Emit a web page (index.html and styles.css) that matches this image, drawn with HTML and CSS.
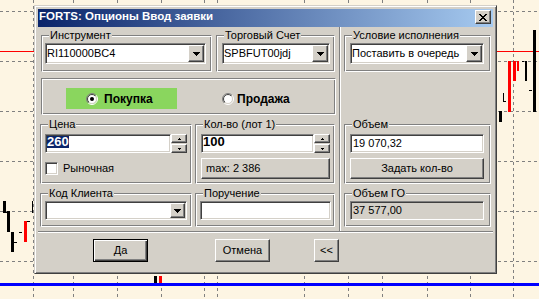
FILE: index.html
```html
<!DOCTYPE html>
<html lang="ru">
<head>
<meta charset="utf-8">
<title>FORTS: Опционы Ввод заявки</title>
<link rel="stylesheet" href="styles.css">
</head>
<body>
<div class="desktop">
  <svg class="chart" width="539" height="299" viewBox="0 0 539 299">
    <g stroke="#808080" stroke-width="1" stroke-dasharray="3 3" fill="none">
      <line x1="0" y1="11.5" x2="539" y2="11.5"/>
      <line x1="0" y1="61.5" x2="539" y2="61.5"/>
      <line x1="0" y1="111.5" x2="539" y2="111.5"/>
      <line x1="0" y1="161.5" x2="539" y2="161.5"/>
      <line x1="0" y1="211.5" x2="539" y2="211.5"/>
      <line x1="0" y1="261.5" x2="539" y2="261.5"/>
      <line x1="33.5" y1="0" x2="33.5" y2="299"/>
      <line x1="73.5" y1="0" x2="73.5" y2="299"/>
      <line x1="117.5" y1="0" x2="117.5" y2="299"/>
      <line x1="161.5" y1="0" x2="161.5" y2="299"/>
      <line x1="204.5" y1="0" x2="204.5" y2="299"/>
      <line x1="217.5" y1="0" x2="217.5" y2="299"/>
      <line x1="304.5" y1="0" x2="304.5" y2="299"/>
      <line x1="348.5" y1="0" x2="348.5" y2="299"/>
      <line x1="382.5" y1="0" x2="382.5" y2="299"/>
      <line x1="427.5" y1="0" x2="427.5" y2="299"/>
      <line x1="470.5" y1="0" x2="470.5" y2="299"/>
      <line x1="513.5" y1="0" x2="513.5" y2="299"/>
    </g>
    <line x1="0" y1="51.5" x2="539" y2="51.5" stroke="#ff0000" stroke-width="1"/>
    <rect x="0" y="283" width="539" height="3" fill="#0000ff"/>
    <g fill="#000">
      <rect x="3" y="201" width="3" height="12"/>
      <rect x="6" y="212" width="2" height="1"/>
      <rect x="7" y="211" width="3" height="21"/>
      <rect x="11" y="232" width="3" height="20"/>
      <rect x="14" y="242" width="3" height="1"/>
      <rect x="19" y="232" width="3" height="1"/>
      <rect x="32" y="201" width="1" height="12"/>
      <rect x="154" y="276" width="3" height="7"/>
      <rect x="533" y="30" width="3" height="82"/>
      <rect x="525" y="61" width="2" height="20"/>
      <rect x="522" y="61" width="2" height="1"/>
      <rect x="503" y="93" width="1" height="9"/>
      <rect x="504" y="101" width="2" height="1"/>
      <rect x="529" y="90" width="3" height="1"/>
      <rect x="499" y="111" width="3" height="11"/>
    </g>
    <g fill="#ff0000">
      <rect x="24" y="221" width="3" height="21"/>
      <rect x="159" y="276" width="3" height="7"/>
      <rect x="508" y="61" width="3" height="51"/>
      <rect x="513" y="61" width="3" height="20"/>
      <rect x="517" y="61" width="2" height="10"/>
    </g>
    <g fill="#000">
      <rect x="27" y="221" width="3" height="1"/>
    </g>
  </svg>

  <div class="dialog">
    <div class="caption">
      <span class="caption-title">FORTS: Опционы Ввод заявки</span>
      <span class="close-btn">
        <svg width="8" height="7" viewBox="0 0 8 7"><path fill="#000" d="M0 0h2v1H0z M6 0h2v1H6z M1 1h2v1H1z M5 1h2v1H5z M2 2h4v1H2z M3 3h2v1H3z M2 4h4v1H2z M1 5h2v1H1z M5 5h2v1H5z M0 6h2v1H0z M6 6h2v1H6z"/></svg>
      </span>
    </div>
    <div class="client">
      <div class="main">
        <div class="col-left">
          <div class="row1">
            <div class="group g-instr">
              <div class="legend">Инструмент</div>
              <div class="combo combo-instr"><span class="combo-text">RI110000BC4</span><span class="combo-btn"><svg width="7" height="4" viewBox="0 0 7 4"><path fill="#000" d="M0 0h7v1H0z M1 1h5v1H1z M2 2h3v1H2z M3 3h1v1H3z"/></svg></span></div>
            </div>
            <div class="group g-acct">
              <div class="legend">Торговый Счет</div>
              <div class="combo combo-acct"><span class="combo-text">SPBFUT00jdj</span><span class="combo-btn"><svg width="7" height="4" viewBox="0 0 7 4"><path fill="#000" d="M0 0h7v1H0z M1 1h5v1H1z M2 2h3v1H2z M3 3h1v1H3z"/></svg></span></div>
            </div>
          </div>

          <div class="side">
            <div class="side-buy">
              <span class="radio">
                <svg width="12" height="12" viewBox="0 0 12 12">
                  <defs>
                    <linearGradient id="ro" x1="0" y1="0" x2="1" y2="1"><stop offset="0.5" stop-color="#808080"/><stop offset="0.5" stop-color="#ffffff"/></linearGradient>
                    <linearGradient id="ri" x1="0" y1="0" x2="1" y2="1"><stop offset="0.5" stop-color="#404040"/><stop offset="0.5" stop-color="#d4d0c8"/></linearGradient>
                  </defs>
                  <circle cx="6" cy="6" r="5.5" fill="none" stroke="url(#ro)"/>
                  <circle cx="6" cy="6" r="4.5" fill="#fff" stroke="url(#ri)"/>
                  <circle cx="6" cy="6" r="2" fill="#000"/>
                </svg>
              </span>
              <span class="radio-label label-buy">Покупка</span>
            </div>
            <div class="side-sell">
              <span class="radio">
                <svg width="12" height="12" viewBox="0 0 12 12">
                  <circle cx="6" cy="6" r="5.5" fill="none" stroke="url(#ro)"/>
                  <circle cx="6" cy="6" r="4.5" fill="#fff" stroke="url(#ri)"/>
                </svg>
              </span>
              <span class="radio-label label-sell">Продажа</span>
            </div>
          </div>

          <div class="row3">
            <div class="group g-price">
              <div class="legend">Цена</div>
              <div class="spinedit spin-price">
                <div class="edit edit-price"><span class="edit-bold selected">260</span></div>
                <div class="spin">
                  <span class="spin-btn"><svg width="3" height="2" viewBox="0 0 3 2"><path fill="#000" d="M1 0h1v1H1z M0 1h3v1H0z"/></svg></span>
                  <span class="spin-btn"><svg width="3" height="2" viewBox="0 0 3 2"><path fill="#000" d="M0 0h3v1H0z M1 1h1v1H1z"/></svg></span>
                </div>
              </div>
              <div class="check-row">
                <span class="checkbox"></span>
                <span class="check-label">Рыночная</span>
              </div>
            </div>
            <div class="group g-qty">
              <div class="legend">Кол-во (лот 1)</div>
              <div class="spinedit spin-qty">
                <div class="edit edit-qty"><span class="edit-bold">100</span></div>
                <div class="spin">
                  <span class="spin-btn"><svg width="3" height="2" viewBox="0 0 3 2"><path fill="#000" d="M1 0h1v1H1z M0 1h3v1H0z"/></svg></span>
                  <span class="spin-btn"><svg width="3" height="2" viewBox="0 0 3 2"><path fill="#000" d="M0 0h3v1H0z M1 1h1v1H1z"/></svg></span>
                </div>
              </div>
              <div class="btn btn-max">max: 2 386</div>
            </div>
          </div>

          <div class="row4">
            <div class="group g-client">
              <div class="legend">Код Клиента</div>
              <div class="combo combo-small combo-client"><span class="combo-text"></span><span class="combo-btn"><svg width="7" height="4" viewBox="0 0 7 4"><path fill="#000" d="M0 0h7v1H0z M1 1h5v1H1z M2 2h3v1H2z M3 3h1v1H3z"/></svg></span></div>
            </div>
            <div class="group g-order">
              <div class="legend">Поручение</div>
              <div class="edit edit-order"></div>
            </div>
          </div>
        </div>

        <div class="vsep"></div>

        <div class="col-right">
          <div class="group g-cond">
            <div class="legend">Условие исполнения</div>
            <div class="combo combo-cond"><span class="combo-text">Поставить в очередь</span><span class="combo-btn"><svg width="7" height="4" viewBox="0 0 7 4"><path fill="#000" d="M0 0h7v1H0z M1 1h5v1H1z M2 2h3v1H2z M3 3h1v1H3z"/></svg></span></div>
          </div>
          <div class="group g-vol">
            <div class="legend">Объем</div>
            <div class="edit edit-vol">19 070,32</div>
            <div class="btn btn-setqty">Задать кол-во</div>
          </div>
          <div class="group g-margin">
            <div class="legend">Объем ГО</div>
            <div class="edit edit-margin">37 577,00</div>
          </div>
        </div>
      </div>
      <div class="hsep"></div>
      <div class="buttons">
        <div class="btn btn-default btn-ok">Да</div>
        <div class="btn btn-cancel">Отмена</div>
        <div class="btn btn-more">&lt;&lt;</div>
      </div>
    </div>
  </div>
</div>
</body>
</html>
```

FILE: styles.css
```css
html, body {
  margin: 0;
  padding: 0;
}
body {
  width: 539px;
  height: 299px;
  overflow: hidden;
  font-family: "Liberation Sans", Arial, sans-serif;
  font-size: 11px;
  color: #000;
}
.desktop {
  position: relative;
  width: 539px;
  height: 299px;
  background: #fdf5e3;
  overflow: hidden;
}
.chart {
  position: absolute;
  left: 0;
  top: 0;
  display: block;
}
.dialog {
  position: absolute;
  left: 34px;
  top: 5px;
  width: 463px;
  height: 269px;
  box-sizing: border-box;
  background: #d4d0c8;
  border: 1px solid;
  border-color: #d4d0c8 #404040 #404040 #d4d0c8;
  box-shadow: inset 1px 1px #fff, inset -1px -1px #808080;
  padding: 3px;
  display: flex;
  flex-direction: column;
}
.caption {
  height: 18px;
  flex: none;
  display: flex;
  align-items: flex-start;
  justify-content: space-between;
  background: linear-gradient(to right, #0a246a, #a6caf0);
  color: #fff;
  padding: 0 2px 0 1px;
}
.caption-title {
  font-weight: bold;
  font-size: 11.5px;
  line-height: 15px;
  white-space: nowrap;
}
.close-btn {
  margin-top: 1px;
  width: 16px;
  height: 14px;
  box-sizing: border-box;
  background: #d4d0c8;
  border: 1px solid;
  border-color: #fff #404040 #404040 #fff;
  box-shadow: inset -1px -1px #808080;
  display: flex;
  align-items: center;
  justify-content: center;
  padding-right: 1px;
}
.close-btn svg { display: block; }
.client {
  flex: 1;
  display: flex;
  flex-direction: column;
}
.main {
  height: 204px;
  display: flex;
}
.col-left {
  width: 301px;
  display: flex;
  flex-direction: column;
}
.col-right {
  padding-left: 3px;
  display: flex;
  flex-direction: column;
}
.vsep {
  width: 2px;
  box-sizing: border-box;
  border-left: 1px solid #808080;
  border-right: 1px solid #fff;
}
.hsep {
  height: 2px;
  box-sizing: border-box;
  border-top: 1px solid #808080;
  border-bottom: 1px solid #fff;
}
.row1 {
  display: flex;
  gap: 4px;
  margin: 8px 0 0 3px;
}
.row3 {
  display: flex;
  gap: 3px;
  margin: 9px 0 0 2px;
}
.row4 {
  display: flex;
  gap: 3px;
  margin: 9px 0 0 2px;
}

/* etched group box */
.group, .side {
  box-sizing: border-box;
  border: 1px solid;
  border-color: #808080 #fff #fff #808080;
  box-shadow: inset 1px 1px #fff, inset -1px -1px #808080;
}
.group {
  display: flex;
  flex-direction: column;
  align-items: flex-start;
}
.legend {
  width: max-content;
  height: 13px;
  line-height: 13px;
  margin: -7px 0 0 7px;
  padding: 0 1px;
  background: #d4d0c8;
  white-space: nowrap;
}
.g-instr { width: 171px; height: 37px; }
.g-acct { width: 119px; height: 37px; }
.g-cond { width: 147px; height: 37px; margin-top: 8px; }
.g-price { width: 152px; height: 60px; }
.g-qty { width: 140px; height: 60px; }
.g-vol { width: 147px; height: 60px; margin-top: 52px; }
.g-client { width: 152px; height: 34px; }
.g-order { width: 140px; height: 34px; }
.g-margin { width: 147px; height: 34px; margin-top: 9px; }

/* sunken fields */
.combo, .edit, .checkbox {
  box-sizing: border-box;
  border: 1px solid;
  border-color: #808080 #fff #fff #808080;
  box-shadow: inset 1px 1px #404040, inset -1px -1px #d4d0c8;
  background: #fff;
}
.combo {
  height: 21px;
  padding: 1px;
  display: flex;
}
.combo-small { height: 19px; }
.combo-text {
  flex: 1;
  line-height: 17px;
  white-space: nowrap;
  overflow: hidden;
}
.combo-small .combo-text { line-height: 15px; }
.combo-btn, .spin-btn, .btn {
  box-sizing: border-box;
  background: #d4d0c8;
  border: 1px solid;
  border-color: #fff #404040 #404040 #fff;
  box-shadow: inset -1px -1px #808080;
}
.combo-btn {
  width: 16px;
  height: 17px;
  display: flex;
  align-items: center;
  justify-content: center;
}
.combo-small .combo-btn { width: 15px; height: 15px; }
.combo-btn svg, .spin-btn svg { display: block; }
.combo-instr { width: 161px; margin: 1px 0 0 3px; }
.combo-acct { width: 108px; margin: 1px 0 0 5px; }
.combo-cond { width: 134px; margin: 1px 0 0 5px; }
.combo-client { width: 142px; margin: 1px 0 0 4px; }

.edit {
  height: 19px;
  padding: 1px;
  line-height: 15px;
  white-space: nowrap;
  display: flex;
  align-items: flex-start;
}
.edit-bold {
  display: block;
  font-weight: bold;
  font-size: 13px;
  height: 12px;
  line-height: 12px;
}
.selected {
  background: #0a246a;
  color: #fff;
}
.edit-price { width: 126px; }
.edit-qty { width: 113px; }
.edit-vol { width: 134px; margin: 3px 0 0 5px; padding-left: 2px; }
.edit-order { width: 131px; margin: 1px 0 0 4px; }
.edit-margin { width: 134px; margin: 1px 0 0 5px; background: #d4d0c8; padding-left: 2px; }

.spinedit {
  display: flex;
}
.spin-price { margin: 3px 0 0 4px; }
.spin-qty { margin: 3px 0 0 5px; }
.spin {
  width: 16px;
  height: 19px;
  display: flex;
  flex-direction: column;
  justify-content: space-between;
}
.spin-btn {
  height: 9px;
  display: flex;
  align-items: center;
  justify-content: center;
}

.check-row {
  display: flex;
  align-items: center;
  margin: 9px 0 0 4px;
}
.checkbox {
  width: 13px;
  height: 13px;
}
.check-label {
  margin-left: 5px;
  line-height: 13px;
}

.btn {
  height: 21px;
  line-height: 19px;
  text-align: center;
  white-space: nowrap;
}
.btn-max {
  width: 129px;
  margin: 5px 0 0 5px;
  text-align: left;
  padding-left: 4px;
}
.btn-setqty {
  width: 134px;
  margin: 5px 0 0 5px;
}

/* buy / sell box */
.side {
  width: 295px;
  height: 37px;
  margin: 6px 0 0 3px;
  display: flex;
  align-items: flex-start;
}
.side-buy {
  margin: 9px 0 0 24px;
  width: 111px;
  height: 21px;
  box-sizing: border-box;
  padding-left: 20px;
  background: #8ad65e;
  display: flex;
  align-items: center;
}
.side-sell {
  margin: 9px 0 0 45px;
  height: 21px;
  display: flex;
  align-items: center;
}
.radio, .radio svg { display: block; width: 12px; height: 12px; }
.radio-label {
  font-weight: bold;
  font-size: 12px;
  line-height: 14px;
}
.label-buy { margin-left: 6px; }
.label-sell { margin-left: 3px; }

/* bottom buttons */
.buttons {
  display: flex;
  margin-top: 6px;
  padding-left: 55px;
}
.buttons .btn {
  height: 23px;
  line-height: 21px;
}
.btn-ok { width: 55px; }
.btn-default {
  border: 1px solid #000;
  box-shadow: inset 1px 1px #fff, inset -1px -1px #404040, inset -2px -2px #808080;
}
.btn-cancel { width: 55px; margin-left: 67px; }
.btn-more { width: 25px; margin-left: 44px; }
```
